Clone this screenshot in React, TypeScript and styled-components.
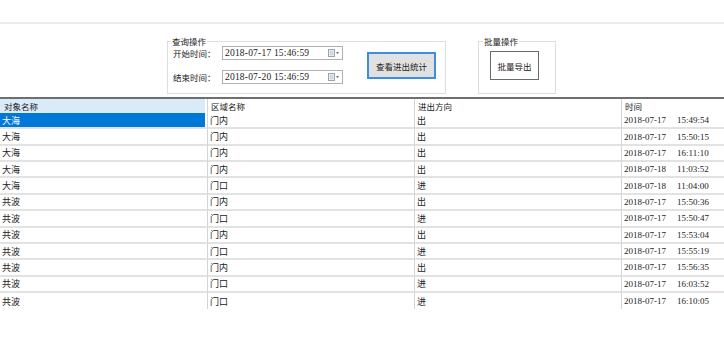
import React from 'react';
import styled, { createGlobalStyle } from 'styled-components';

const GlobalStyle = createGlobalStyle`
    html, body {
        margin: 0;
        padding: 0;
        background: #ffffff;
    }
    body {
        font-family: "Noto Sans CJK SC", "Liberation Sans", sans-serif;
        color: #222;
    }
`;

interface Record {
    name: string;
    area: string;
    direction: string;
    date: string;
    time: string;
}

const records: Record[] = [
    { name: '大海', area: '门内', direction: '出', date: '2018-07-17', time: '15:49:54' },
    { name: '大海', area: '门内', direction: '出', date: '2018-07-17', time: '15:50:15' },
    { name: '大海', area: '门内', direction: '出', date: '2018-07-17', time: '16:11:10' },
    { name: '大海', area: '门内', direction: '出', date: '2018-07-18', time: '11:03:52' },
    { name: '大海', area: '门口', direction: '进', date: '2018-07-18', time: '11:04:00' },
    { name: '共波', area: '门内', direction: '出', date: '2018-07-17', time: '15:50:36' },
    { name: '共波', area: '门口', direction: '进', date: '2018-07-17', time: '15:50:47' },
    { name: '共波', area: '门内', direction: '出', date: '2018-07-17', time: '15:53:04' },
    { name: '共波', area: '门口', direction: '进', date: '2018-07-17', time: '15:55:19' },
    { name: '共波', area: '门内', direction: '出', date: '2018-07-17', time: '15:56:35' },
    { name: '共波', area: '门口', direction: '进', date: '2018-07-17', time: '16:03:52' },
    { name: '共波', area: '门口', direction: '进', date: '2018-07-17', time: '16:10:05' },
];

const Page = styled.div`
    width: 724px;
    height: 337px;
    overflow: hidden;
`;

const TopBar = styled.div`
    height: 22px;
    border-bottom: 2px solid #ececec;
`;

const Toolbar = styled.div`
    height: 75px;
    padding: 12px 0 0 167px;
    box-sizing: border-box;
    display: flex;
    gap: 32px;
    align-items: flex-start;
    border-bottom: 2px solid #6f6f6f;
`;

const Group = styled.fieldset<{ $width: number; $pad: number }>`
    margin: 0;
    width: ${p => p.$width}px;
    height: 58px;
    box-sizing: border-box;
    padding: 0 0 0 ${p => p.$pad}px;
    border: 1px solid #dedede;
    display: flex;
    align-items: flex-start;
    min-inline-size: 0;
`;

const Legend = styled.legend<{ $offset: number }>`
    margin-left: ${p => p.$offset}px;
    padding: 0 1px;
    font-size: 8.5px;
    line-height: 10px;
    color: #222;
`;

const Fields = styled.div`
    display: flex;
    flex-direction: column;
    gap: 10px;
`;

const FieldRow = styled.div`
    display: flex;
    align-items: center;
    height: 14px;
`;

const FieldLabel = styled.span`
    width: 49px;
    font-size: 8.5px;
    line-height: 14px;
    color: #222;
`;

const DateInput = styled.div`
    width: 121px;
    height: 14px;
    box-sizing: border-box;
    border: 1px solid #b0b0b0;
    display: flex;
    align-items: center;
    justify-content: space-between;
    padding: 0 3px 0 2px;
    font-family: "Liberation Serif", serif;
    font-size: 9.5px;
    letter-spacing: 0.2px;
    color: #222;
    background: #fff;
`;

const ActionButton = styled.div<{ $primary?: boolean; $w: number; $h: number; $top: number }>`
    margin-top: ${p => p.$top}px;
    margin-left: ${p => (p.$primary ? 24 : 0)}px;
    width: ${p => p.$w}px;
    height: ${p => p.$h}px;
    box-sizing: border-box;
    display: flex;
    align-items: center;
    justify-content: center;
    font-size: 8.5px;
    color: #222;
    background: ${p => (p.$primary ? '#e1e1e1' : '#ffffff')};
    border: ${p => (p.$primary ? '2px solid #3c8fdc' : '1px solid #6a6a6a')};
`;

const Grid = styled.div`
    display: grid;
    grid-template-columns: 207px 207px 207px 1fr;
`;

const HeadCell = styled.div<{ $hot?: boolean; $first?: boolean }>`
    height: 14px;
    line-height: 14px;
    font-size: 8.5px;
    padding-left: ${p => (p.$first ? 4 : 3)}px;
    color: #222;
    background: ${p => (p.$hot ? '#d9eaf8' : '#fff')};
    border-left: ${p => (p.$first ? 'none' : '1px solid #d4d4d4')};
    box-shadow: ${p => (p.$hot ? 'inset -2px 0 0 #fff' : 'none')};
`;

const Cell = styled.div<{ $first?: boolean; $selected?: boolean; $last?: boolean }>`
    height: 16.36px;
    box-sizing: border-box;
    display: flex;
    align-items: center;
    gap: 11px;
    padding-left: 2px;
    font-size: 9px;
    color: ${p => (p.$selected ? '#fff' : '#222')};
    background: ${p => (p.$selected ? '#0078d7' : '#fff')};
    border-left: ${p => (p.$first ? 'none' : '1px solid #d4d4d4')};
    border-bottom: ${p => (p.$last ? 'none' : '2px solid #e2e2e2')};
    box-shadow: ${p => (p.$selected ? 'inset -2px 0 0 #fff' : 'none')};
`;

const Mono = styled.span`
    font-family: "Liberation Serif", serif;
    font-size: 9px;
`;

const CalendarIcon = () => (
    <svg width="11" height="8" viewBox="0 0 11 8">
        <rect x="0.5" y="0.5" width="6" height="7" fill="#e8ecf0" stroke="#9aa4ae" strokeWidth="1" />
        <line x1="2" y1="3" x2="5" y2="3" stroke="#b8c0c8" />
        <line x1="2" y1="5" x2="5" y2="5" stroke="#b8c0c8" />
        <path d="M8 3 L11 3 L9.5 5 Z" fill="#666" />
    </svg>
);

const App = () => {
    return (
        <Page>
            <GlobalStyle />
            <TopBar />
            <Toolbar>
                <Group $width={279} $pad={5}>
                    <Legend $offset={-2}>查询操作</Legend>
                    <Fields>
                        <FieldRow>
                            <FieldLabel>开始时间：</FieldLabel>
                            <DateInput>
                                <span>2018-07-17 15:46:59</span>
                                <CalendarIcon />
                            </DateInput>
                        </FieldRow>
                        <FieldRow>
                            <FieldLabel>结束时间：</FieldLabel>
                            <DateInput>
                                <span>2018-07-20 15:46:59</span>
                                <CalendarIcon />
                            </DateInput>
                        </FieldRow>
                    </Fields>
                    <ActionButton $primary $w={69} $h={27} $top={6}>查看进出统计</ActionButton>
                </Group>
                <Group $width={78} $pad={11}>
                    <Legend $offset={-7}>批量操作</Legend>
                    <ActionButton $w={49} $h={29} $top={5}>批量导出</ActionButton>
                </Group>
            </Toolbar>
            <Grid>
                <HeadCell $first $hot>对象名称</HeadCell>
                <HeadCell>区域名称</HeadCell>
                <HeadCell>进出方向</HeadCell>
                <HeadCell>时间</HeadCell>
                {records.map((r, i) => {
                    const last = i === records.length - 1;
                    return (
                        <React.Fragment key={i}>
                            <Cell $first $selected={i === 0} $last={last}>{r.name}</Cell>
                            <Cell $last={last}>{r.area}</Cell>
                            <Cell $last={last}>{r.direction}</Cell>
                            <Cell $last={last}>
                                <Mono>{r.date}</Mono>
                                <Mono>{r.time}</Mono>
                            </Cell>
                        </React.Fragment>
                    );
                })}
            </Grid>
        </Page>
    );
};

export default App;
